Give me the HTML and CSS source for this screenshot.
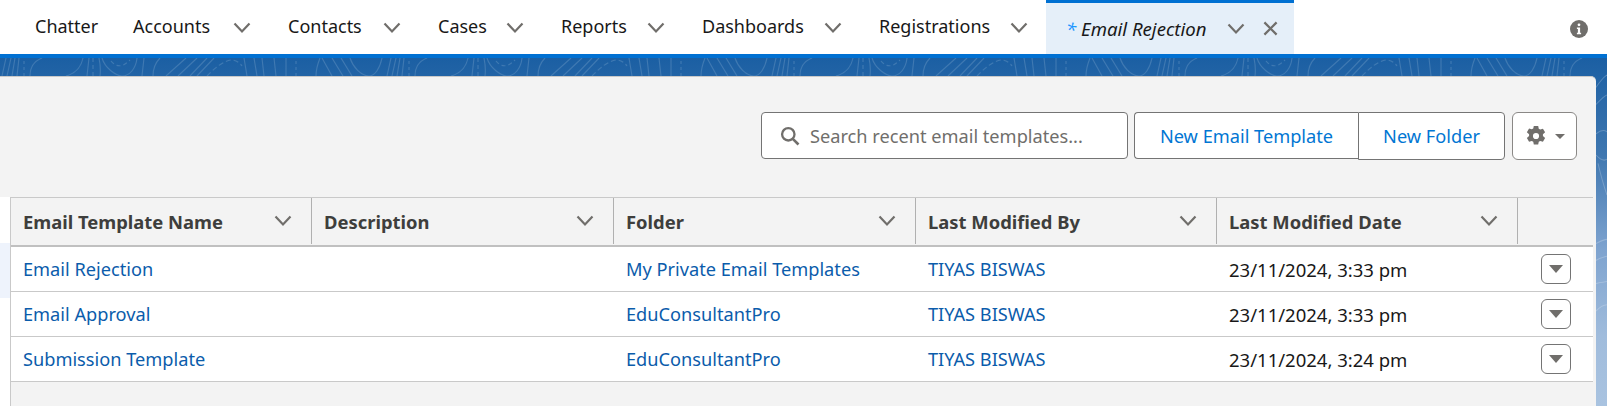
FILE: index.html
```html
<!DOCTYPE html>
<html lang="en">
<head>
    <meta charset="UTF-8">
    <meta name="viewport" content="width=device-width, initial-scale=1.0">
    <title>Email Templates</title>
    <link rel="stylesheet" href="styles.css">
</head>
<body>
    <svg class="icon-defs" width="0" height="0" aria-hidden="true">
        <symbol id="chev" viewBox="0 0 18 12"><path d="M1.5 1.5 9 9.5l7.5-8" fill="none" stroke="currentColor" stroke-width="2.2"/></symbol>
        <pattern id="topo" width="385" height="18" patternUnits="userSpaceOnUse">
            <g fill="none" stroke="#3f79b2" stroke-width="1.1">
                <path d="M2 18 6 0M7 18l4-18M12 18l3-18M17 18l2-18M30 18c0-8 4-15 12-18"/>
                <path d="M24 18V0" stroke-dasharray="3 3"/>
                <path d="M66 18c8-2 15-8 17-18M87 18l2-18M100 18c1-7 0-13-1-18M102 0c3 10 14 18 20 18 8 0 14-8 15-18M142 18l2-18M153 18c0-8 3-14 7-18"/>
                <path d="M111 3c5 6 11 7 19-1M93 18V0" stroke-dasharray="4 3"/>
                <path d="M166 18 186 0M178 18 197 0M190 18 207 0M197 18 214 0"/>
                <path d="M207 18c8-8 16-15 24-16 4 0 8 2 11 6" stroke-dasharray="5 3"/>
                <path d="M247 18 244 0M257 18 254 0M264 18l-2-18M276 18 274 0M286 18V0"/>
                <path d="M316 18c0-7 2-13 4-18M322 0l10 18M332 0l11 18M341 0l11 18M350 0c3 9 11 18 19 18 6 0 11-8 13-18"/>
                <path d="M296 18V0" stroke-dasharray="3 3"/>
            </g>
        </pattern>
    </svg>

    <nav class="tabs">
        <a class="tab tab-chatter">Chatter</a>
        <a class="tab tab-accounts">Accounts <svg class="chev"><use href="#chev"/></svg></a>
        <a class="tab tab-contacts">Contacts <svg class="chev"><use href="#chev"/></svg></a>
        <a class="tab tab-cases">Cases <svg class="chev"><use href="#chev"/></svg></a>
        <a class="tab tab-reports">Reports <svg class="chev"><use href="#chev"/></svg></a>
        <a class="tab tab-dashboards">Dashboards <svg class="chev"><use href="#chev"/></svg></a>
        <a class="tab tab-registrations">Registrations <svg class="chev"><use href="#chev"/></svg></a>
        <a class="tab tab-active">
            <span class="tab-title"><span class="star">*</span> Email Rejection</span>
            <svg class="chev"><use href="#chev"/></svg>
            <svg class="close" viewBox="0 0 16 16"><path d="M1.5 1.5l13 13M14.5 1.5l-13 13" stroke="currentColor" stroke-width="2.4"/></svg>
        </a>
        <svg class="info" viewBox="0 0 18 18">
            <circle cx="9" cy="9" r="9" fill="#706e6b"/>
            <path d="M9 3.4a1.4 1.4 0 1 1 0 2.8 1.4 1.4 0 0 1 0-2.8zM6.9 7.4h3.2v5.4h1v1.5H6.9v-1.5h1V8.9h-1z" fill="#fff"/>
        </svg>
    </nav>

    <main class="page">
        <svg class="banner" width="100%" height="18" aria-hidden="true"><rect width="100%" height="18" fill="url(#topo)"/></svg>
        <svg class="side-lines" viewBox="0 0 11 330" preserveAspectRatio="none" aria-hidden="true">
            <g fill="none" stroke="#fff" stroke-opacity="0.22">
                <path d="M0 28C4 22 8 18 11 16M0 44c4-4 8-8 11-9M0 72c5-4 8-4 11-2M0 92c4 4 8 6 11 4M2 100c3 12 6 22 9 30M0 176c4-2 8-4 11-4M0 192c4-3 8-3 11-4M0 214c4-2 8-1 11-2M0 240c4-4 8-6 11-6"/>
            </g>
        </svg>
        <section class="card">
            <div class="toolbar">
                <div class="search">
                    <svg viewBox="0 0 20 20"><circle cx="8.3" cy="8.3" r="6.2" fill="none" stroke="currentColor" stroke-width="2.3"/><path d="M12.8 12.8l5.7 5.7" stroke="currentColor" stroke-width="2.6"/></svg>
                    <span>Search recent email templates...</span>
                </div>
                <div class="btn-group">
                    <button class="btn btn-new">New Email Template</button>
                    <button class="btn btn-folder">New Folder</button>
                </div>
                <button class="btn btn-gear">
                    <svg class="gear" viewBox="0 0 20 20"><path fill-rule="evenodd" d="M8 .8h4l.5 2.6 1.3.7 2.5-.8 2 3.4-2 1.8v1.6l2 1.8-2 3.4-2.5-.8-1.3.7-.5 2.6H8l-.5-2.6-1.3-.7-2.5.8-2-3.4 2-1.8V8.3l-2-1.8 2-3.4 2.5.8 1.3-.7zM10 7.2a2.8 2.8 0 1 0 0 5.6 2.8 2.8 0 0 0 0-5.6z"/></svg>
                    <span class="caret"></span>
                </button>
            </div>

            <div class="card-body">
                <div class="rail"><div class="rail-item"></div></div>
                <div class="list">
                    <div class="row row-head">
                        <div class="cell">Email Template Name <svg class="chev"><use href="#chev"/></svg></div>
                        <div class="cell">Description <svg class="chev"><use href="#chev"/></svg></div>
                        <div class="cell">Folder <svg class="chev"><use href="#chev"/></svg></div>
                        <div class="cell">Last Modified By <svg class="chev"><use href="#chev"/></svg></div>
                        <div class="cell">Last Modified Date <svg class="chev"><use href="#chev"/></svg></div>
                        <div class="cell"></div>
                    </div>
                    <div class="row">
                        <div class="cell"><a>Email Rejection</a></div>
                        <div class="cell"></div>
                        <div class="cell"><a>My Private Email Templates</a></div>
                        <div class="cell"><a>TIYAS BISWAS</a></div>
                        <div class="cell cell-date">23/11/2024, 3:33 pm</div>
                        <div class="cell"><button class="row-menu"><span></span></button></div>
                    </div>
                    <div class="row">
                        <div class="cell"><a>Email Approval</a></div>
                        <div class="cell"></div>
                        <div class="cell"><a>EduConsultantPro</a></div>
                        <div class="cell"><a>TIYAS BISWAS</a></div>
                        <div class="cell cell-date">23/11/2024, 3:33 pm</div>
                        <div class="cell"><button class="row-menu"><span></span></button></div>
                    </div>
                    <div class="row">
                        <div class="cell"><a>Submission Template</a></div>
                        <div class="cell"></div>
                        <div class="cell"><a>EduConsultantPro</a></div>
                        <div class="cell"><a>TIYAS BISWAS</a></div>
                        <div class="cell cell-date">23/11/2024, 3:24 pm</div>
                        <div class="cell"><button class="row-menu"><span></span></button></div>
                    </div>
                </div>
            </div>
        </section>
    </main>
</body>
</html>
```

FILE: styles.css
```css
* {
    box-sizing: border-box;
}
html, body {
    height: 100%;
}
body {
    margin: 0;
    display: flex;
    flex-direction: column;
    overflow: hidden;
    font-family: "Noto Sans", "Open Sans", sans-serif;
    font-size: 18.2px;
    color: #181818;
    background-color: #fff;
}
.icon-defs {
    position: absolute;
}
.chev {
    width: 18px;
    height: 12px;
    color: #706e6b;
    flex: none;
}

/* top tabs */
.tabs {
    display: flex;
    height: 58px;
    flex: none;
    align-items: stretch;
    padding: 0 19px 0 35px;
    border-bottom: 4px solid #0070d2;
    font-size: 18px;
}
.tab {
    display: flex;
    align-items: center;
    justify-content: space-between;
    padding: 0 37px 2px 0;
    white-space: nowrap;
}
.tab .chev {
    margin-top: 3px;
}
.tab-chatter { width: 98px; }
.tab-accounts { width: 155px; }
.tab-contacts { width: 150px; }
.tab-cases { width: 123px; }
.tab-reports { width: 141px; }
.tab-dashboards { width: 177px; }
.tab-registrations { width: 167px; padding-right: 18px; }
.tab-active {
    width: 248px;
    padding: 0 16px 0 20px;
    justify-content: flex-start;
    background-color: #e5eff9;
    border-top: 3px solid #0070d2;
}
.tab-title {
    font-style: italic;
    font-size: 18.6px;
}
.star {
    color: #1b96ff;
}
.tab-active .chev {
    margin-left: auto;
    margin-top: 0;
}
.close {
    width: 15px;
    height: 15px;
    margin-left: 18px;
    color: #706e6b;
}
.info {
    width: 18px;
    height: 18px;
    margin: auto 0 auto auto;
    position: relative;
    top: 2px;
}

/* page area */
.page {
    flex: 1;
    display: flex;
    position: relative;
    padding: 18px 11px 0 0;
    min-height: 0;
    background: linear-gradient(#1b5fa3 0, #3f77b0 28%, #7ea3cf 55%, #a0bcdc 80%, #a9c3e0 100%);
}
.banner {
    position: absolute;
    top: 0;
    left: 0;
}
.side-lines {
    position: absolute;
    top: 0;
    right: 0;
    width: 11px;
    height: 100%;
}
.card {
    position: relative;
    flex: 1;
    display: flex;
    flex-direction: column;
    min-width: 0;
    background-color: #f3f3f3;
    border-top: 1px solid #c9c9c9;
    border-top-right-radius: 5px;
}

/* toolbar */
.toolbar {
    display: flex;
    flex: none;
    justify-content: flex-end;
    align-items: flex-start;
    height: 120px;
    padding: 35px 19px 0 0;
}
.search {
    display: flex;
    align-items: center;
    gap: 10px;
    width: 367px;
    height: 47px;
    padding-left: 18px;
    margin-right: 6px;
    background-color: #fff;
    border: 1px solid #747474;
    border-radius: 4px;
    color: #706e6b;
}
.search svg {
    width: 20px;
    height: 20px;
}
.btn-group {
    display: flex;
    margin-right: 7px;
}
.btn {
    font: inherit;
    color: #0176d3;
    background-color: #fff;
    border: 1px solid #747474;
    padding: 0;
}
.btn-new {
    width: 224px;
    height: 47px;
    border-right: none;
    border-radius: 4px 0 0 4px;
}
.btn-folder {
    width: 147px;
    height: 48px;
    border-radius: 0 4px 4px 0;
}
.btn-gear {
    display: flex;
    align-items: center;
    justify-content: center;
    gap: 8px;
    width: 65px;
    height: 48px;
    border-color: #8a8886;
    border-radius: 6px;
}
.gear {
    width: 22px;
    height: 22px;
    fill: #706e6b;
}
.caret {
    border-left: 5px solid transparent;
    border-right: 5px solid transparent;
    border-top: 5px solid #706e6b;
}

/* list view */
.card-body {
    flex: 1;
    display: flex;
    min-height: 0;
}
.rail {
    width: 10px;
    flex: none;
    background-color: #fff;
}
.rail-item {
    height: 55px;
    margin-top: 46px;
    background-color: #eef3fc;
}
.list {
    flex: 1;
    min-width: 0;
    margin-right: 3px;
    border-left: 1px solid #c9c9c9;
}
.row {
    display: grid;
    grid-template-columns: 301px 302px 302px 301px 301px 1fr;
    height: 45px;
    background-color: #fff;
    border-bottom: 1px solid #c9c9c9;
}
.row-head {
    height: 50px;
    background-color: #f3f3f3;
    border-top: 1px solid #c9c9c9;
    border-bottom: 2px solid #c0c0c0;
    font-size: 18.4px;
    font-weight: 700;
    color: #3e3e3c;
}
.cell {
    display: flex;
    align-items: center;
    justify-content: space-between;
    padding: 0 19px 0 12px;
    min-width: 0;
    white-space: nowrap;
}
.cell-date {
    font-size: 18.5px;
}
.row-head .cell {
    border-right: 1px solid #b0b0b0;
    margin-bottom: 1px;
}
.row-head .cell:last-child {
    border-right: none;
}
.row a {
    color: #0b5cab;
}
.row-menu {
    display: flex;
    align-items: center;
    justify-content: center;
    flex: none;
    width: 30px;
    height: 30px;
    padding: 0;
    margin-left: 11px;
    background-color: #fff;
    border: 1px solid #747474;
    border-radius: 6px;
}
.row-menu span {
    border-left: 7px solid transparent;
    border-right: 7px solid transparent;
    border-top: 8px solid #706e6b;
}
```
